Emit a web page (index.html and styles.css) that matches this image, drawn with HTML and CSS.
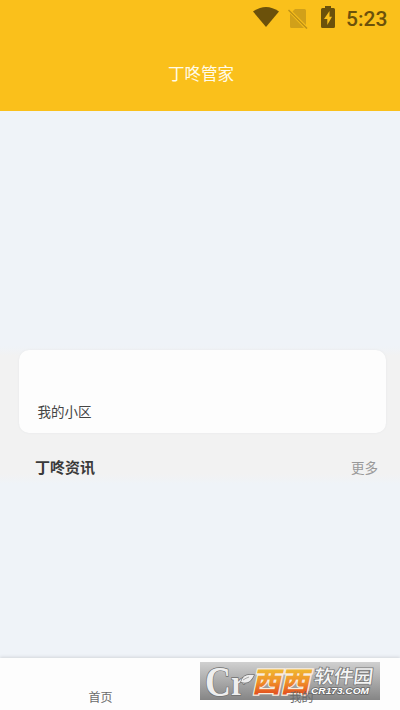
FILE: index.html
```html
<!DOCTYPE html>
<html lang="zh-CN">
<head>
<meta charset="utf-8">
<title>丁咚管家</title>
<link rel="stylesheet" href="styles.css">
</head>
<body>
<div class="app">
  <header class="header">
    <div class="status">
      <svg class="wifi" width="26" height="20" viewBox="0 0 26 20"><path d="M0 4.500Q13-4.500 26 4.500L13 20Z"/></svg>
      <svg class="sim" width="20" height="21" viewBox="0 0 20 21"><path class="card" d="M7 1h9.500q1.500 0 1.500 1.500V17L4.500 3.500Z M2 5.500L16 20H3.500Q2 20 2 18.500Z"/><path class="slash" d="M.5 2L19 20.500"/></svg>
      <svg class="battery" width="14" height="22" viewBox="0 0 14 22"><path class="cell" d="M4 0h6v2h2.500q1.500 0 1.500 1.500v17q0 1.500-1.500 1.500h-11Q0 22 0 20.500v-17Q0 2 1.500 2H4Z"/><path class="bolt" d="M8.500 5L3 13h3.300v6L11 10.800H8.500Z"/></svg>
      <span class="clock">5:23</span>
    </div>
    <h1 class="title">丁咚管家</h1>
  </header>
  <main class="main">
    <section class="panel">
      <div class="card-box"><span>我的小区</span></div>
      <div class="news"><h2>丁咚资讯</h2><a class="more">更多</a></div>
    </section>
  </main>
  <nav class="tabs">
    <a>首页</a>
    <a><span class="over">我的</span></a>
  </nav>
  <svg class="watermark" width="180" height="38" viewBox="0 0 180 38">
    <defs>
      <linearGradient id="bg" x1="0" y1="0" x2="0" y2="1"><stop offset="0" stop-color="#d0d0d0"/><stop offset="1" stop-color="#858585"/></linearGradient>
      <linearGradient id="gold" gradientUnits="userSpaceOnUse" x1="0" y1="-22" x2="0" y2="2"><stop offset="0" stop-color="#efb52f"/><stop offset=".5" stop-color="#f0902a"/><stop offset="1" stop-color="#e2501f"/></linearGradient>
    </defs>
    <rect width="180" height="38" fill="url(#bg)"/>
    <text class="emblem cap" x="5" y="33.500" textLength="26" lengthAdjust="spacingAndGlyphs">C</text>
    <text class="emblem low" x="31" y="33" textLength="14" lengthAdjust="spacingAndGlyphs">r</text>
    <path class="emblem" d="M41 20Q43 11 54 13Q50 23 41 20Z"/>
    <path class="vein" d="M43 18Q46 16 49 15"/>
    <text class="mark-gold" transform="translate(52 30) skewX(-12)" textLength="57" lengthAdjust="spacingAndGlyphs">西西</text>
    <text class="mark-cn" transform="translate(113.500 21) skewX(-7)" textLength="59" lengthAdjust="spacingAndGlyphs">软件园</text>
    <text class="mark-url" x="111" y="31.500" textLength="58" lengthAdjust="spacingAndGlyphs">CR173.COM</text>
  </svg>
</div>
</body>
</html>
```
FILE: styles.css
```css
* { box-sizing: border-box; }
body { margin: 0; font-family: Roboto, "Noto Sans CJK SC", sans-serif; }
.app { position: relative; width: 400px; height: 710px; display: flex; flex-direction: column; background: #eff3f8; }
.header { height: 111px; background: #fac01b; }
.status { height: 37px; display: flex; align-items: center; justify-content: flex-end; padding-right: 12px; color: #6b510b; }
.wifi { fill: #6b510b; margin: -3px 9px 0 0; }
.sim { margin: -1px 13px 0 0; }
.sim .card { fill: #d1a019; }
.sim .slash { stroke: #bd9117; stroke-width: 1.500; }
.battery { margin: -3px 11px 0 0; fill: #6b510b; }
.bolt { fill: #fac01b; }
.clock { font-size: 21px; font-weight: 500; line-height: 24px; margin-top: 1px; width: 42px; }
.title { margin: 26px 0 0 2px; text-align: center; font-size: 16.500px; line-height: 24px; font-weight: 400; color: #fffbe9; }
.main { flex: 1; padding-top: 235px; }
.panel { height: 138px; padding: 4px 14px 0 19px; background: linear-gradient(#eff3f8, #f2f2f2 10px, #f2f2f2 128px, #eff3f8); }
.card-box { height: 83px; padding: 52px 0 0 18.500px; border-radius: 10px; background: #fdfdfd; box-shadow: 0 0 2px #e3e5e7; font-size: 13.500px; line-height: 20px; color: #444; }
.news { display: flex; align-items: center; justify-content: space-between; padding: 23px 8px 0 16px; }
.news h2 { margin: 0; font-size: 15px; line-height: 24px; font-weight: 700; color: #3a3a3a; }
.more { font-size: 13.500px; color: #999; line-height: 24px; }
.tabs { height: 52px; display: flex; background: #fdfdfd; box-shadow: 0 -1px 3px #d2d5da; }
.tabs a { flex: 1; padding: 31px 0 0 1px; text-align: center; font-size: 12px; line-height: 18px; color: #6b6b6b; }
.over { position: relative; z-index: 1; left: 1px; }
.watermark { position: absolute; left: 200px; top: 662px; overflow: visible; }
.emblem { fill: #eee; stroke: #707070; stroke-width: 1.400; paint-order: stroke; font-family: "Liberation Serif", serif; font-weight: 700; }
.cap { font-size: 43px; }
.low { font-size: 36px; }
.vein { fill: none; stroke: #888; stroke-width: .7; }
.mark-gold { font: 900 28px "Noto Sans CJK SC", sans-serif; fill: url(#gold); stroke: #f9eddf; stroke-width: 2.500; paint-order: stroke; }
.mark-cn { font: 500 18.500px "Noto Sans CJK SC", sans-serif; fill: #f5f5f5; stroke: #777; stroke-width: 1.500; paint-order: stroke; }
.mark-url { font: italic 700 9.500px "Liberation Sans", sans-serif; fill: #fff; stroke: #686868; stroke-width: 1.500; paint-order: stroke; }
```
